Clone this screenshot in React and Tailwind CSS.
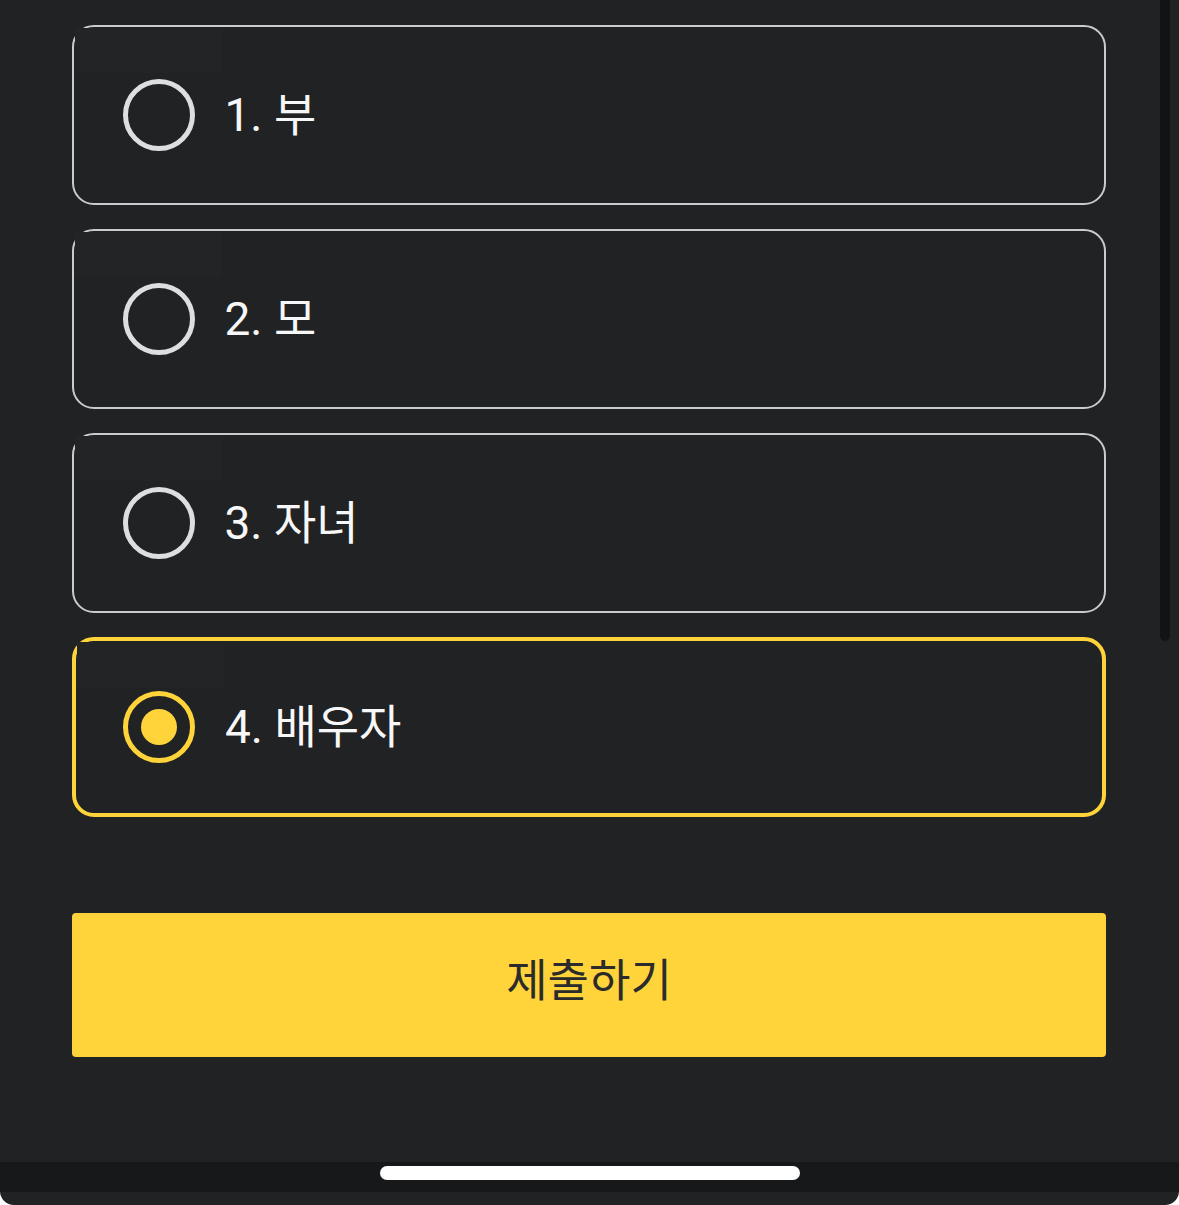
import React, { useState } from "react";

const options = [
  { id: 1, label: "1. 부" },
  { id: 2, label: "2. 모" },
  { id: 3, label: "3. 자녀" },
  { id: 4, label: "4. 배우자" },
];

const font = { fontFamily: 'Roboto, "Noto Sans CJK KR", sans-serif' };

function Radio({ checked }) {
  return checked ? (
    <span className="flex h-[72px] w-[72px] shrink-0 items-center justify-center rounded-full border-[5px] border-[#ffd43a]">
      <span className="h-[36px] w-[36px] rounded-full bg-[#ffd43a]" />
    </span>
  ) : (
    <span className="h-[72px] w-[72px] shrink-0 rounded-full border-[5px] border-[#dcdee1]" />
  );
}

function Option({ label, checked, onClick }) {
  return (
    <button
      onClick={onClick}
      className={`relative flex h-[180px] w-full items-center gap-[30px] rounded-[22px] text-left ${
        checked
          ? "border-[4px] border-[#ffd43a] pl-[47px]"
          : "border-[2.5px] border-[#c9cbce] pl-[48.5px]"
      }`}
    >
      <span className="absolute left-[1px] top-[1px] h-[45px] w-[147px] bg-[#232426]" />
      <Radio checked={checked} />
      <span className="relative text-[46px] leading-none text-[#f7f7f7]" style={font}>
        {label}
      </span>
    </button>
  );
}

export default function App() {
  const [selected, setSelected] = useState(4);

  return (
    <div className="h-[1205px] w-[1179px] bg-white">
      <div className="relative flex h-full flex-col overflow-hidden rounded-b-[14px] bg-[#212224]">
        {/* scrollbar */}
        <div className="absolute right-[9px] top-0 h-[641px] w-[10px] rounded-b-full bg-[#121314]" />

        <div className="flex flex-1 flex-col pl-[72px] pr-[73px] pt-[25px]">
          <div className="flex flex-col gap-[24px]">
            {options.map((o) => (
              <Option
                key={o.id}
                label={o.label}
                checked={selected === o.id}
                onClick={() => setSelected(o.id)}
              />
            ))}
          </div>
          <button
            className="mt-[96px] flex h-[144px] w-full items-center justify-center rounded-[4px] bg-[#ffd43a] pb-[6px] text-[45px] text-[#2b2b2b]"
            style={font}
          >
            제출하기
          </button>
        </div>

        <div className="flex h-[30px] justify-center bg-[#17181a] pt-[4px]">
          <div className="h-[14px] w-[420px] rounded-full bg-white" />
        </div>
        <div className="h-[13px]" />
      </div>
    </div>
  );
}
